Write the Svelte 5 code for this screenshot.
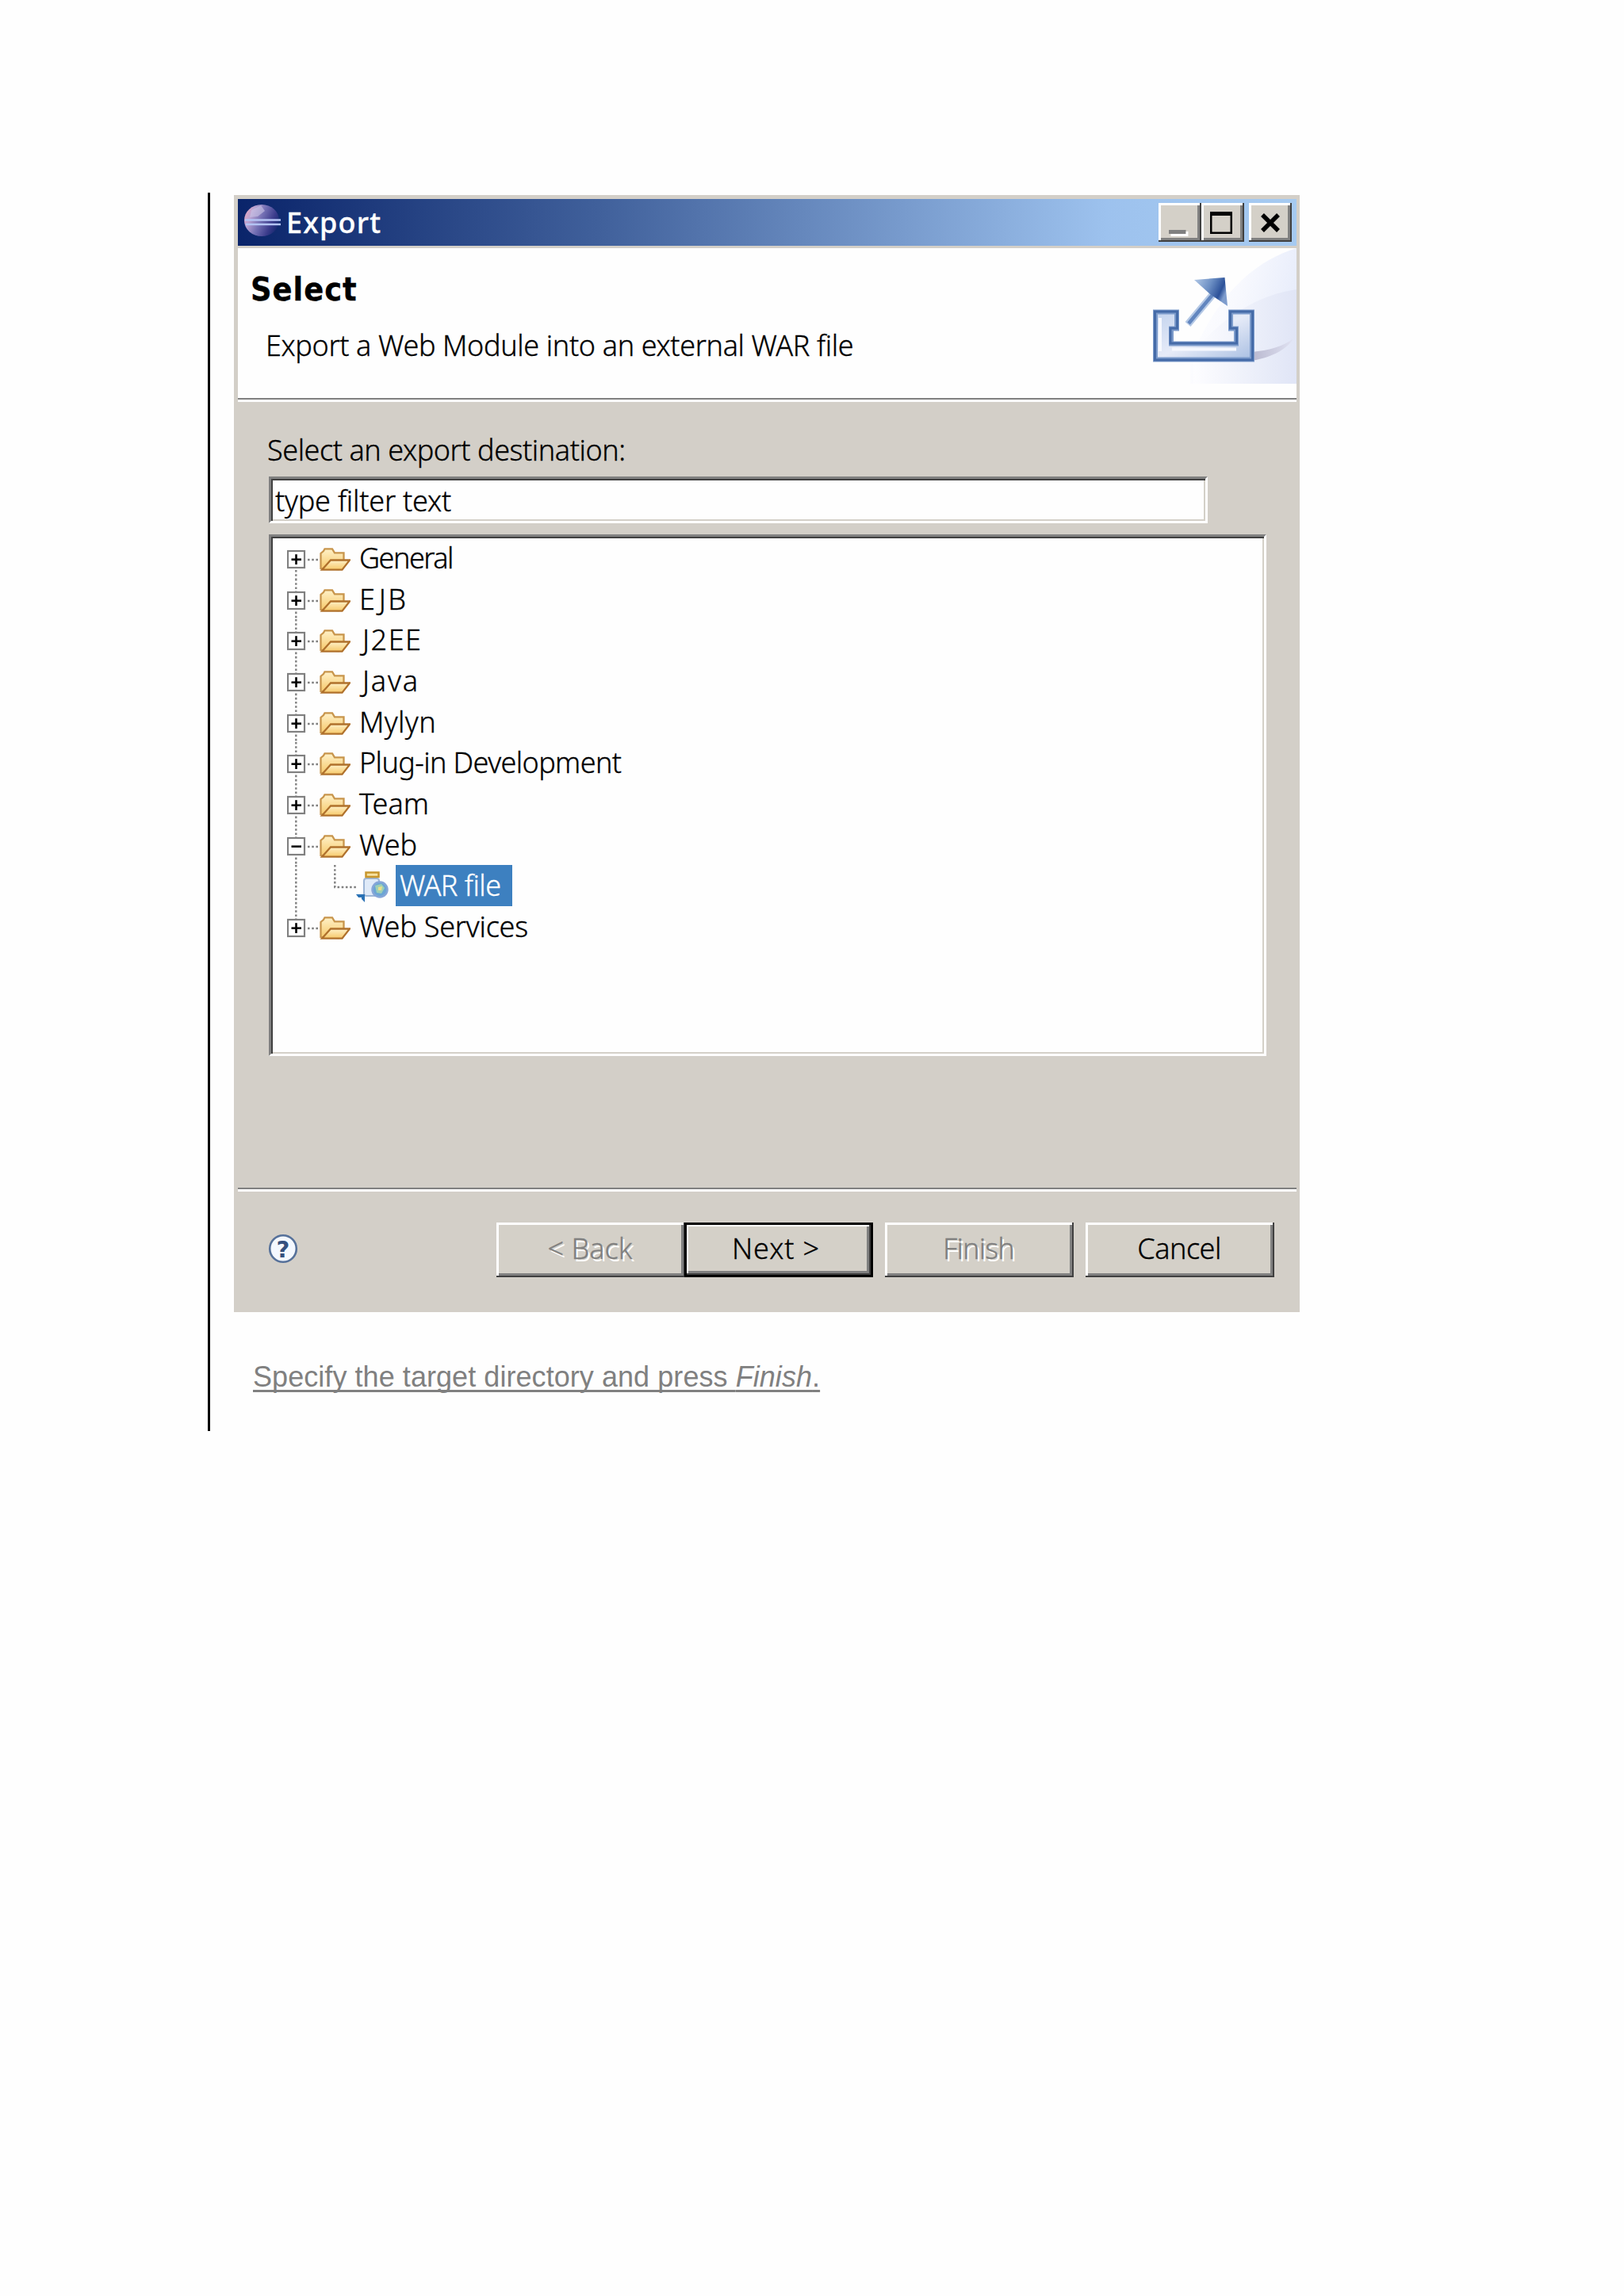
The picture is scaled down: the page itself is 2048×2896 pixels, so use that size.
<script lang="ts">
	type Node = { label: string; open?: boolean; child?: boolean; spacing: number; indent?: number };

	const nodes: Node[] = [
		{ label: 'General', spacing: -1.5 },
		{ label: 'EJB', spacing: 2.6 },
		{ label: 'J2EE', spacing: 1.5, indent: 4 },
		{ label: 'Java', spacing: 1.8, indent: 4 },
		{ label: 'Mylyn', spacing: 0.4 },
		{ label: 'Plug-in Development', spacing: -0.6 },
		{ label: 'Team', spacing: 0 },
		{ label: 'Web', open: true, spacing: 0 },
		{ label: 'WAR file', child: true, spacing: -0.5 },
		{ label: 'Web Services', spacing: -0.2 }
	];

	let filter = $state('type filter text');
	let selected = $state('WAR file');
</script>

<main class="page">
	<div class="revision">
		<section class="dialog">
			<header class="titlebar">
				<svg class="logo" viewBox="0 0 48 42">
					<defs>
						<linearGradient id="orb" x1="0" y1="0.2" x2="1" y2="0.6">
							<stop offset="0" stop-color="#eaa6bd" />
							<stop offset="0.22" stop-color="#b9a3d2" />
							<stop offset="0.5" stop-color="#7470b4" />
							<stop offset="0.8" stop-color="#3c3c8c" />
							<stop offset="1" stop-color="#182a72" />
						</linearGradient>
					</defs>
					<ellipse cx="23" cy="21" rx="22" ry="20" fill="url(#orb)" />
					<path d="M10 8 L22 2 L27 9 L18 16 L8 17 Z" fill="#c9c4e6" opacity="0.6" />
					<path d="M2 20.500 H47 M3 26 H47" stroke="#b4c4f4" stroke-width="2.600" />
				</svg>
				<h1>Export</h1>
				<div class="controls">
					<button class="ctl" aria-label="Minimize">
						<svg viewBox="0 0 54 49">
							<path d="M13 36.500 H34.500" stroke="#808080" stroke-width="5" />
							<path d="M15.500 40.500 H36 V36" fill="none" stroke="#fff" stroke-width="2.800" />
						</svg>
					</button>
					<button class="ctl" aria-label="Maximize">
						<svg viewBox="0 0 54 49">
							<path
								d="M11 11 H39 V39 H11 Z M13.500 16 V36.500 H36.500 V16 Z"
								fill="#000"
								fill-rule="evenodd"
							/>
						</svg>
					</button>
					<button class="ctl close" aria-label="Close">
						<svg viewBox="0 0 54 49">
							<path d="M17 15 L37 35 M37 15 L17 35" stroke="#000" stroke-width="5.500" />
						</svg>
					</button>
				</div>
			</header>

			<div class="banner">
				<div class="banner-text">
					<h2>Select</h2>
					<p>Export a Web Module into an external WAR file</p>
				</div>
				<svg class="banner-art" viewBox="0 0 194 171">
					<defs>
						<linearGradient id="sweep" x1="0" y1="0" x2="1" y2="0.3">
							<stop offset="0" stop-color="#ffffff" />
							<stop offset="0.5" stop-color="#f8f9fe" />
							<stop offset="1" stop-color="#e8edfb" />
						</linearGradient>
						<linearGradient id="sweep2" x1="0" y1="0" x2="1" y2="0">
							<stop offset="0" stop-color="#fdfdff" />
							<stop offset="1" stop-color="#e0e5f6" />
						</linearGradient>
						<linearGradient id="tray" x1="0" y1="0" x2="1" y2="1">
							<stop offset="0" stop-color="#c3d3ee" />
							<stop offset="0.5" stop-color="#e6ebf8" />
							<stop offset="1" stop-color="#a9bfe2" />
						</linearGradient>
						<linearGradient id="head" x1="0" y1="0" x2="1" y2="0.4">
							<stop offset="0" stop-color="#b5cbe8" />
							<stop offset="0.5" stop-color="#6c8fc4" />
							<stop offset="0.85" stop-color="#2c5199" />
							<stop offset="1" stop-color="#7e9ccd" />
						</linearGradient>
						<linearGradient id="shade" x1="0" y1="0" x2="1" y2="0">
							<stop offset="0" stop-color="#b9b8cf" />
							<stop offset="1" stop-color="#e0e2f2" />
						</linearGradient>
					</defs>
					<path d="M60 140 C90 70 130 20 194 0 V171 H60 Z" fill="url(#sweep)" />
					<path d="M64 130 C100 90 140 60 194 52 V171 H64 Z" fill="url(#sweep2)" />
					<path d="M138 131 C158 129 178 124 190 114 C180 130 160 138 138 142 Z" fill="url(#shade)" />
					<path
						d="M16 80.500 H43 V101.500 H36 V120.500 H118 V101.500 H111 V80.500 H138 V140.500 H16 Z"
						fill="url(#tray)"
						stroke="#7c9bcb"
						stroke-width="6"
					/>
					<path
						d="M15.500 80 H43.500 V101 H35 V120 H118.500 V101 H110.500 V80 H138.500 V141 H15.500 Z"
						fill="none"
						stroke="#456ba8"
						stroke-width="3"
					/>
					<path d="M22 88 V130 M37 127.500 H118" fill="none" stroke="#f6f8fe" stroke-width="4" />
					<path d="M57 96 L88 59" stroke="#b4c8e5" stroke-width="9" />
					<path d="M58 95 L88 59" stroke="#6286bf" stroke-width="4.500" />
					<path d="M65 40 L103.500 37 L107 73 L85 58 Z" fill="url(#head)" />
				</svg>
			</div>

			<div class="content">
				<label for="filter">Select an export destination:</label>
				<input id="filter" class="sunken" type="text" bind:value={filter} />
				<ul class="tree sunken">
					{#each nodes as node, i}
						<li>
							{#if node.child}
								<svg class="gutter wide" viewBox="0 0 128 52">
									<path class="dots" d="M11.300 0 V52" />
									<path class="dots" d="M60.300 0 V28 H87" />
									<rect x="97" y="17" width="19" height="22" rx="3" fill="#dfeaf8" stroke="#9db6d6" stroke-width="2" />
									<rect x="99.500" y="9.500" width="16" height="5.500" fill="#f7e2a0" stroke="#c8962c" stroke-width="2.500" />
									<circle cx="117" cy="31" r="9.500" fill="#6ba6d4" stroke="#86a6d8" stroke-width="2.500" />
									<path d="M111 26 L119 24 L123 29 L119 36 L113 35 Z" fill="#9fd0b4" />
									<path d="M115 28 L120 27 L119 32 L115 32 Z" fill="#eadf8a" />
									<path d="M87 37 H98 V47 L94 43 V41 H90 Z" fill="#2a72b5" />
								</svg>
							{:else}
								<svg class="gutter" viewBox="0 0 80 52">
									<defs>
										<linearGradient id="folder{i}" x1="0" y1="0" x2="0" y2="1">
											<stop offset="0" stop-color="#fff1c8" />
											<stop offset="1" stop-color="#f6c868" />
										</linearGradient>
									</defs>
									<path class="dots" d="M11.300 {i === 0 ? 41 : 0} V{i === nodes.length - 1 ? 16 : 52}" />
									<path class="dots" d="M26 28 H40" />
									<rect x="1" y="17" width="21" height="21" fill="#fff" stroke="#808080" stroke-width="2.200" />
									<path d="M5.500 27.700 H18" stroke="#000" stroke-width="2.600" />
									{#if !node.open}
										<path d="M11.500 21.200 V34" stroke="#000" stroke-width="2.600" />
									{/if}
									<path
										d="M42.500 39 V20 L46 17 L47.500 14.300 H57 L60 19.300 H71.500 V34 L65 40 Z"
										fill="url(#folder{i})"
										stroke="#c8954c"
										stroke-width="2.300"
									/>
									<path
										d="M44 40.700 L55 28.500 H79 L69.500 40.700 Z"
										fill="url(#folder{i})"
										stroke="#b0712c"
										stroke-width="2.300"
									/>
								</svg>
							{/if}
							<button
								class="node"
								class:selected={selected === node.label}
								style="letter-spacing: {node.spacing}px; text-indent: {node.indent ?? 0}px"
								onclick={() => (selected = node.label)}>{node.label}</button
							>
						</li>
					{/each}
				</ul>
			</div>

			<footer class="actions">
				<svg class="help" viewBox="0 0 38 38">
					<circle cx="19" cy="19" r="16.800" fill="#f4f8ff" stroke="#56719a" stroke-width="2.600" />
					<text x="19" y="29.500" text-anchor="middle">?</text>
				</svg>
				<button class="btn back" disabled>&lt; Back</button>
				<button class="btn next">Next &gt;</button>
				<button class="btn finish" disabled>Finish</button>
				<button class="btn cancel">Cancel</button>
			</footer>
		</section>

		<p class="note">Specify the target directory and press <em>Finish</em>.</p>
	</div>
</main>

<style>
	:global(body) {
		background: #fefefe;
	}

	.page {
		padding: 243px 0 0 262px;
		font-family: 'Noto Sans', sans-serif;
		font-size: 36px;
		font-weight: 300;
		color: #000;
	}

	.revision {
		box-sizing: border-box;
		height: 1562px;
		padding: 3px 0 0 30px;
		border-left: 3px solid #000;
	}

	.dialog {
		box-sizing: border-box;
		display: flex;
		flex-direction: column;
		width: 1344px;
		height: 1409px;
		padding: 5px 4px 0 5px;
		background: #d3cfc8;
		-webkit-text-stroke-width: 0.35px;
	}

	h1,
	h2,
	p,
	ul {
		margin: 0;
		padding: 0;
	}

	button,
	input {
		font: inherit;
		color: inherit;
		border: 0;
		border-radius: 0;
		padding: 0;
	}

	.titlebar {
		display: flex;
		align-items: center;
		height: 59px;
		padding: 0 6px 0 7px;
		background: linear-gradient(90deg, #0a246a 0%, #40609b 34%, #9dc2ee 82%, #a6caf0 100%);
	}

	.logo {
		width: 48px;
		height: 42px;
		margin-top: -5px;
	}

	h1 {
		margin-left: 6px;
		font-size: 36px;
		font-weight: 500;
		line-height: 59px;
		letter-spacing: 1.2px;
		color: #fff;
	}

	.controls {
		display: flex;
		margin-left: auto;
	}

	.ctl {
		width: 54px;
		height: 49px;
		background: #d4d0c8;
		box-shadow:
			inset -2px -2px #404040,
			inset 3px 3px #fff,
			inset -5px -5px #808080;
	}

	.ctl svg {
		display: block;
	}

	.close {
		margin-left: 6px;
	}

	.banner {
		display: flex;
		justify-content: space-between;
		height: 189px;
		margin-top: 3px;
		background: #fefefe;
		border-bottom: 2px solid #808080;
		box-shadow: 0 3px #fff;
	}

	h2 {
		padding: 25px 0 0 16px;
		font-family: 'DejaVu Sans Condensed', 'DejaVu Sans', sans-serif;
		font-stretch: condensed;
		font-size: 41px;
		font-weight: 700;
		line-height: 54px;
		letter-spacing: 1px;
	}

	.banner-text p {
		padding: 19px 0 0 35px;
		line-height: 50px;
		letter-spacing: -0.36px;
	}

	.banner-art {
		width: 194px;
		height: 171px;
	}

	.content {
		display: flex;
		flex-direction: column;
		flex: 1;
		padding: 39px 38px 0 39px;
	}

	label {
		margin-left: -2px;
		line-height: 50px;
		letter-spacing: -0.44px;
	}

	.sunken {
		box-sizing: border-box;
		background: #fefefe;
		border: solid;
		border-width: 3px;
		border-color: #808080 #fff #fff #808080;
		box-shadow:
			inset 2px 2px #404040,
			inset -2px -2px #d4d0c8;
	}

	input {
		width: 1184px;
		height: 59px;
		margin-top: 8px;
		padding: 1px 0 0 5px;
		letter-spacing: -0.2px;
	}

	.tree {
		height: 658px;
		margin-top: 14px;
		padding: 1px 0 0 20px;
		list-style: none;
	}

	li {
		display: flex;
		height: 51.67px;
	}

	.gutter {
		flex: none;
		width: 80px;
		height: 52px;
	}

	.gutter.wide {
		width: 128px;
	}

	.dots {
		fill: none;
		stroke: #808080;
		stroke-width: 2.4;
		stroke-dasharray: 2.6 2.6;
	}

	.node {
		margin-left: 8px;
		padding: 0 3px;
		background: none;
		line-height: 51.67px;
		white-space: nowrap;
	}

	.node.selected {
		width: 147px;
		margin-left: 9px;
		padding: 0 0 0 5px;
		text-align: left;
		background: #3d80c0;
		color: #fff;
	}

	.actions {
		display: flex;
		box-sizing: border-box;
		height: 157px;
		padding: 42px 28px 0 38px;
		border-top: 2px solid #808080;
		box-shadow: inset 0 3px #fff;
	}

	.help {
		width: 38px;
		height: 38px;
		margin: 14px auto 0 0;
	}

	.help text {
		font: 700 29px 'DejaVu Sans', sans-serif;
		fill: #35507e;
	}

	.btn {
		width: 238px;
		height: 69px;
		padding: 0 2px 5px 0;
		background: #d4d0c8;
		box-shadow:
			inset -2px -2px #404040,
			inset 3px 3px #fff,
			inset -5px -5px #808080;
	}

	.btn:disabled {
		color: #808080;
		text-shadow: 2.5px 2.5px #fff;
	}

	.next {
		margin-left: -1px;
		padding-right: 7px;
		letter-spacing: 0.9px;
		box-shadow:
			inset 0 0 0 3px #000,
			inset -5px -5px #404040,
			inset 5px 5px #fff,
			inset -8px -8px #808080;
	}

	.finish {
		margin-left: 15px;
		letter-spacing: -0.8px;
	}

	.cancel {
		margin-left: 15px;
		letter-spacing: -0.5px;
	}

	.note {
		padding: 61px 0 0 24px;
		font-family: 'Liberation Sans', Arial, sans-serif;
		font-weight: 400;
		line-height: 42px;
		letter-spacing: 0.06px;
		color: #808080;
		text-decoration: underline;
		text-decoration-thickness: 2.5px;
		text-decoration-skip-ink: none;
		text-underline-offset: 4px;
	}
</style>
